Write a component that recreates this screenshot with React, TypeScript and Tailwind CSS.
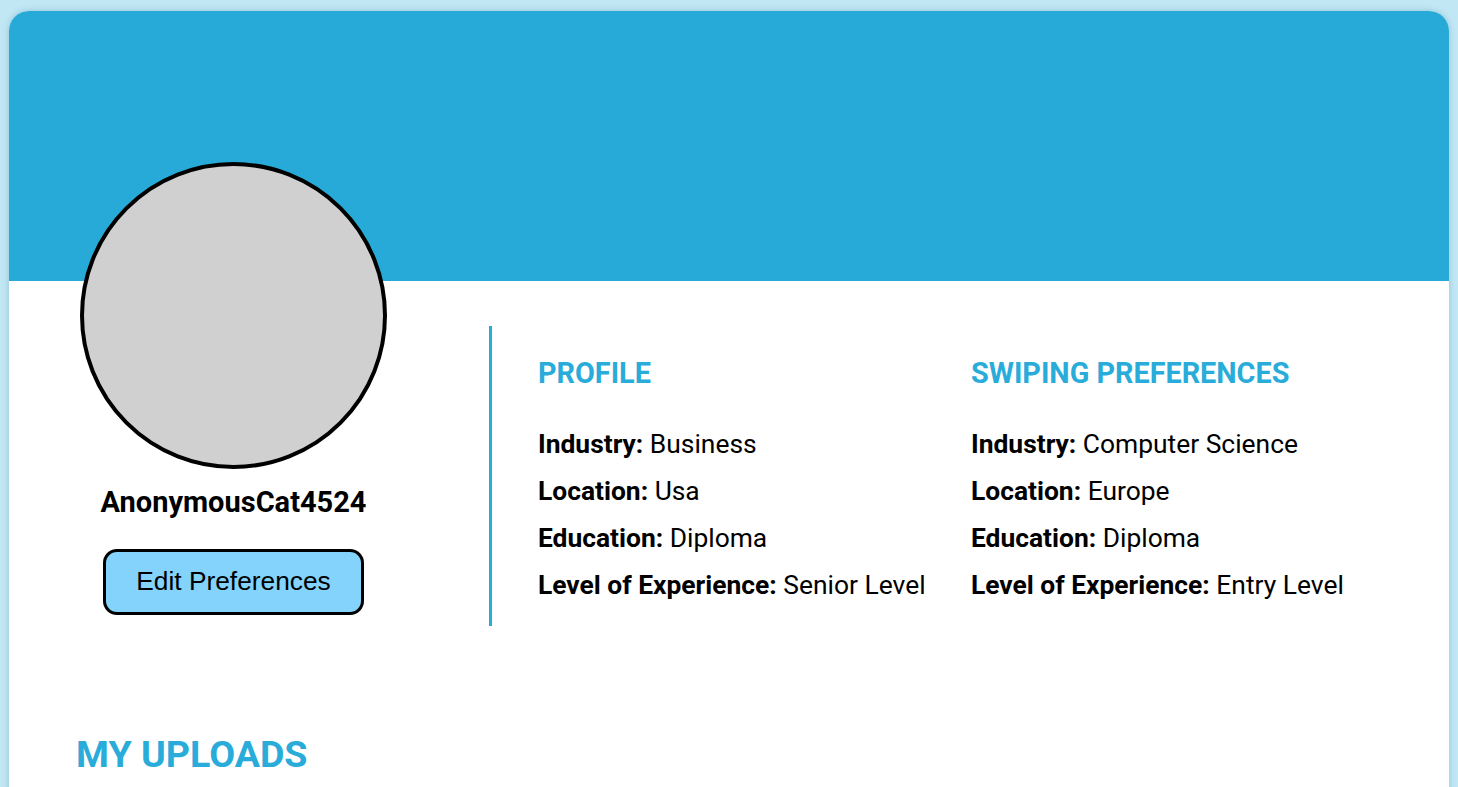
import React from "react";

const profile = [
  ["Industry:", "Business"],
  ["Location:", "Usa"],
  ["Education:", "Diploma"],
  ["Level of Experience:", "Senior Level"],
];

const swiping = [
  ["Industry:", "Computer Science"],
  ["Location:", "Europe"],
  ["Education:", "Diploma"],
  ["Level of Experience:", "Entry Level"],
];

function InfoColumn({ title, rows }: { title: string; rows: string[][] }) {
  return (
    <div className="w-[433px] shrink-0">
      <h2 className="text-[28.8px] leading-[34px] font-bold text-[#29acd9] mt-[30px]">{title}</h2>
      <div className="mt-[31px]">
        {rows.map(([k, v]) => (
          <div key={k} className="text-[26.4px] leading-[47px] text-black whitespace-nowrap">
            <span className="font-bold">{k}</span> {v}
          </div>
        ))}
      </div>
    </div>
  );
}

export default function App() {
  return (
    <div
      className="min-h-screen bg-[#c1e7f5] pl-[9px] pt-[11px] overflow-hidden"
      style={{ fontFamily: "Roboto, 'Noto Sans', sans-serif" }}
    >
      <div className="w-[1440px] rounded-t-[20px] bg-white overflow-hidden shadow-[0_0_6px_rgba(0,90,130,0.25)] pb-[200px]">
        <div className="h-[270px] bg-[#27aad7]" />
        <div className="flex pl-[71px]">
          <div className="w-[307px] shrink-0 flex flex-col items-center -mt-[119px]">
            <div className="w-[307px] h-[307px] rounded-full bg-[#d0d0d0] border-[4px] border-black" />
            <div className="mt-[16px] text-[29px] leading-[34px] font-bold text-black">AnonymousCat4524</div>
            <button
              className="mt-[30px] w-[261px] h-[66px] rounded-[14px] border-[3px] border-black bg-[#83d3fd] text-[26.3px] text-black flex items-center justify-center"
              style={{ fontFamily: "'Liberation Sans', Arial, sans-serif" }}
            >
              Edit Preferences
            </button>
          </div>
          <div className="ml-[102px] mt-[45px] h-[300px] border-l-[3px] border-[#29acd9] pl-[46px] flex">
            <InfoColumn title="PROFILE" rows={profile} />
            <InfoColumn title="SWIPING PREFERENCES" rows={swiping} />
          </div>
        </div>
        <h2 className="pl-[67px] mt-[107px] text-[37.6px] leading-[42px] font-bold text-[#29acd9]">MY UPLOADS</h2>
      </div>
    </div>
  );
}
